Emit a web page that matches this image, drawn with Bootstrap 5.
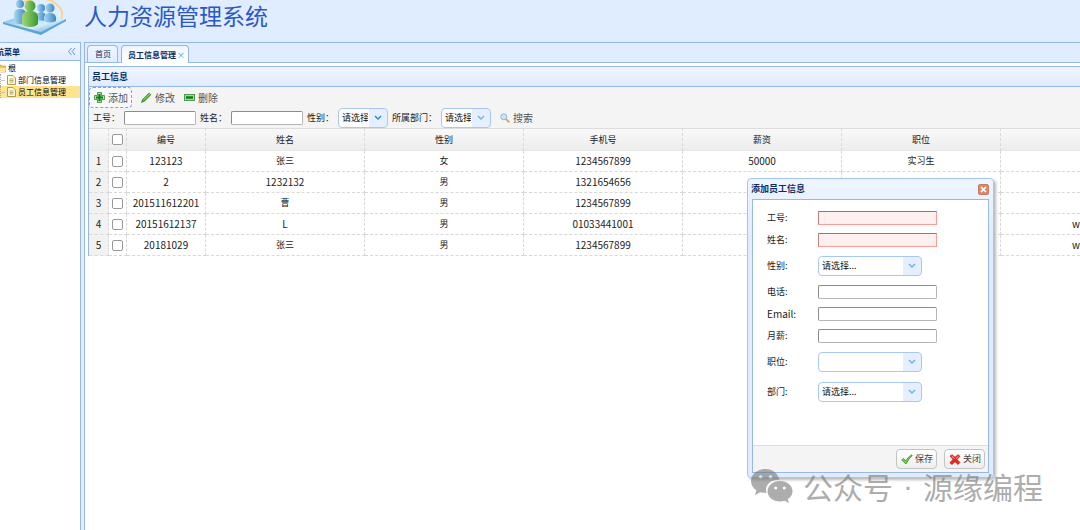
<!DOCTYPE html>
<html lang="zh-CN">
<head>
<meta charset="utf-8">
<meta name="viewport" content="width=device-width, initial-scale=1">
<title>人力资源管理系统</title>
<link href="https://cdn.jsdelivr.net/npm/bootstrap@5.3.0/dist/css/bootstrap.min.css" rel="stylesheet">
<style>
:root{--line:#95b8e7;--pale:#e0ecff;--navy:#0e2d5f}
body{font-family:"Noto Sans CJK SC",sans-serif;font-size:9px;line-height:12px;color:#222;background:#fff}
button,input,select{font:inherit;color:inherit}
.shell{overflow:hidden}
.top-bar{height:42px;background:var(--pale)}
.top-bar h1{font-size:23px;line-height:30px;color:#2a59c7;margin-left:18px}
.work{background:var(--pale)}
.side{width:81px;border:1px solid var(--line);border-left:0;border-bottom:0;background:#fff;overflow:hidden}
.side-in{margin-left:-12px}
.grad{background:linear-gradient(#eff5ff,#e0ecff)}
.side-title{height:18px;font-size:8px;color:var(--navy);border-bottom:1px solid var(--line)}
.side-title button,.tab-item button{color:#5590dd;line-height:12px}
.tree{font-size:8px;padding-top:1px}
.tree a{color:#000;text-decoration:none;height:12px;gap:2px;padding-left:12px}
.tree a:not(.root)::before{content:"";width:5px;height:12px;border-left:1px dotted #aaa;background:linear-gradient(#c4c4c4,#c4c4c4) center/100% 1px no-repeat}
.tree a.root{padding-left:9px}
.tree a.on{background:#ffe48d}
.main-pane{margin-left:3px;border:1px solid var(--line);border-right:0;border-bottom:0;background:#fff}
.tabs{height:20px;background:var(--pale);border-bottom:1px solid var(--line);padding:2px 2px 0;gap:3px}
.tab-item{height:17px;font-size:8px;padding:0 6px 0 7px;border:1px solid var(--line);border-bottom:0;border-radius:4px 4px 0 0;color:var(--navy);background:linear-gradient(#eff5ff,#e0ecff)}
.tab-item a{color:inherit;text-decoration:none}
.tab-item.on{height:18px;margin-bottom:-1px;background:linear-gradient(#eff5ff,#fff);padding:0 3px 0 6px;font-weight:700}
.tab-item button{font-size:8px;margin-left:1px}
.grid-panel{margin:3px 0 0 3px;border:1px solid var(--line);border-right:0;border-bottom:0}
.panel-title{height:20px;padding-left:3px;font-weight:700;color:var(--navy);border-bottom:1px solid var(--line)}
.tools{background:#f4f4f4}
.tool{height:21px;padding:0 3px 0 4px;gap:3px;color:#555;border:1px solid transparent;border-radius:4px;background:none;font-size:10px}
.tool.focused{border:1px dashed #9d8df0;background:#f8f8f8}
.search{height:20px;padding-left:4px}
.box{height:14px;border:1px solid #8c8c8c;border-right-color:#b5b5b5;border-bottom-color:#b5b5b5;border-radius:2px;background:#fff;padding:0 3px;min-width:0}
.search .box{width:72px}
.pick{appearance:none;height:20px;border:1px solid #a9c8f0;border-radius:4px;padding:0 19px 0 3px;color:#111;background:#fff url("data:image/svg+xml,%3Csvg xmlns='http://www.w3.org/2000/svg' viewBox='0 0 18 18'%3E%3Cpath fill='%23e5efff' d='M0 0h18v18H0z'/%3E%3Cpath d='m6 7 3 3 3-3' fill='none' stroke='%2362b3f0' stroke-width='1.4'/%3E%3C/svg%3E") right center/18px 18px no-repeat}
.search .pick{width:50px}
.pick.hot{background-image:url("data:image/svg+xml,%3Csvg xmlns='http://www.w3.org/2000/svg' viewBox='0 0 18 18'%3E%3Cpath fill='%23e5efff' d='M0 0h18v18H0z'/%3E%3Cpath d='m6 7 3 3 3-3' fill='none' stroke='%231a87e0' stroke-width='1.4'/%3E%3C/svg%3E")}
.data{width:100%;table-layout:fixed;border-collapse:separate;border-spacing:0;text-align:center;font-size:10px;line-height:12px;color:#222}
.data th,.data td{height:21px;padding:0;font-weight:400;border-right:1px dashed #d8d8d8;border-bottom:1px dashed #d8d8d8;white-space:nowrap;overflow:hidden}
.data thead{background:linear-gradient(#f9f9f9,#ececec)}
.data thead th{height:23px;border-top:1px solid #ddd;border-bottom:1px solid #e8e8e8}
.data .zh,.data thead th{font-size:9px}
.data td:first-child{background:#f2f2f2}
.data th:last-child,.data td:last-child{border-right:0}
.data input{appearance:none;width:11px;height:11px;border:1px solid #999;border-radius:2px;background:#fff;display:block;margin:auto}
.c-num{width:20px}.c-chk{width:18px}.c-id{width:79px}.c-std{width:159px}
.dlg{position:absolute;left:747px;top:178px;width:247px;padding:0 4px 4px;border:1px solid #a4c5ef;border-radius:4px;background:linear-gradient(#eff5ff,#e0ecff 20%);box-shadow:2px 2px 3px #bbb}
.dlg-title{height:20px;color:var(--navy);font-weight:700;margin-left:-1px}
.dlg-close{width:11px;height:11px;border-radius:2px;background:#df866a;border:1px solid #c97c64;padding:0}
.dlg-body{border:1px solid var(--line);background:#fff;padding:7px 14px 0}
.field{height:22px}
.field.tall{height:30px}
.field label{width:51px;color:#222}
.field .box{width:119px}
.field .pick{width:104px}
.box.bad{background:#fff0f0;border:1px solid #ff9c9c;border-top-color:#b06c6c;border-left-color:#c08080;border-radius:0}
.dlg-foot{margin:38px -14px 0;height:27px;gap:7px;padding-right:3px;border-top:1px solid #ddd;background:#f4f4f4}
.act{height:20px;padding:0 3px 0 4px;gap:2px;border:1px solid #c4c4c4;border-radius:4px;background:linear-gradient(#fff,#eee);color:#444}
.sign{position:absolute;left:751px;top:469px;font-size:30px;line-height:34px;color:#777;opacity:.6;gap:10px}
.sign-dot{font-family:"Liberation Sans",sans-serif}
.mail{font-size:10px}
</style>
</head>
<body>
<div class="shell position-relative vh-100 d-flex flex-column">
  <header class="top-bar d-flex flex-shrink-0">
    <svg width="66" height="36" viewBox="0 0 66 36" aria-hidden="true">
      <defs>
        <linearGradient id="gl" x1="0" y1="0" x2="1" y2="1"><stop stop-color="#6eb5e2"/><stop offset=".6" stop-color="#d6effb"/><stop offset="1" stop-color="#4a9bd2"/></linearGradient>
        <linearGradient id="gg" x1="0" x2="1"><stop stop-color="#a4d87a"/><stop offset="1" stop-color="#3a9a2e"/></linearGradient>
        <linearGradient id="gb" x1="0" x2="1"><stop stop-color="#a9d8f2"/><stop offset="1" stop-color="#3c86c4"/></linearGradient>
      </defs>
      <path d="M24 2Q44-6 56 4Q65 11 61 19" fill="none" stroke="#f7d58f" stroke-width="2"/>
      <path d="M3 22 28 14 66 19 41 32Z" fill="url(#gl)"/>
      <path d="M3 22 41 32 66 19V21L41 35 3 24Z" fill="#5ba5d5"/>
      <g fill="url(#gb)"><circle cx="20" cy="4" r="4"/><path d="M14 22V14q0-5 6-5t6 5v9q-6 3-12-1"/><circle cx="41" cy="8" r="4"/><path d="M36 20v-4q1-4 5-4t5 4v5Z"/><circle cx="50" cy="8" r="4.500"/><path d="M44 21v-4q1-4 6-4t6 4v4q-6 3-12 0"/></g>
      <g fill="url(#gg)"><circle cx="30" cy="6" r="5.500"/><path d="M22 24v-8q1-5 8-5t8 5v8q-2 3-8 3t-8-3"/></g>
    </svg>
    <h1 class="fw-normal mb-0">人力资源管理系统</h1>
  </header>
  <div class="work d-flex flex-grow-1">
    <aside class="side flex-shrink-0">
      <div class="side-in">
        <div class="side-title grad d-flex align-items-center justify-content-between pe-1">
          <strong>导航菜单</strong>
          <button class="btn border-0 p-0" aria-label="折叠"><svg class="d-block" width="9" height="9" viewBox="0 0 9 9" fill="none" stroke="#5b9bea"><path d="M4.500 1 1.500 4.500l3 3.500M8 1 5 4.500 8 8"/></svg></button>
        </div>
        <nav class="tree">
          <a href="#" class="root d-flex align-items-center"><svg width="9" height="9" viewBox="0 0 9 9"><path d="M0 1h4l1 1h4v6H0Z" fill="#eec35f" stroke="#bd9238" stroke-width=".6"/><path d="M2 4h7L8 8H0Z" fill="#ffe8a0"/></svg>根</a>
          <a href="#" class="d-flex align-items-center"><svg width="9" height="10" viewBox="0 0 9 10"><path d="M.5.500h5.500l2.500 2.500v6.500h-8Z" fill="#fffbd0" stroke="#b29c4a"/><path d="M2.500 4h4M2.500 5.500h4M2.500 7h4" stroke="#9a8a56" stroke-width=".7"/></svg>部门信息管理</a>
          <a href="#" class="on d-flex align-items-center"><svg width="9" height="10" viewBox="0 0 9 10"><path d="M.5.500h5.500l2.500 2.500v6.500h-8Z" fill="#fffbd0" stroke="#b29c4a"/><path d="M2.500 4h4M2.500 5.500h4M2.500 7h4" stroke="#9a8a56" stroke-width=".7"/></svg>员工信息管理</a>
        </nav>
      </div>
    </aside>
    <main class="main-pane flex-grow-1">
      <div class="tabs d-flex align-items-end">
        <div class="tab-item d-flex align-items-center"><a href="#">首页</a></div>
        <div class="tab-item on d-flex align-items-center"><a href="#">员工信息管理</a><button class="btn border-0 p-0" aria-label="关闭标签">×</button></div>
      </div>
      <section class="grid-panel">
        <div class="panel-title grad d-flex align-items-center">员工信息</div>
        <div class="tools">
          <div class="d-flex">
            <button class="tool focused d-flex align-items-center me-1"><svg width="11" height="11" viewBox="0 0 11 11"><path d="M3.500.500h4v3h3v4h-3v3h-4v-3h-3v-4h3Z" fill="#b8dfb4" stroke="#4f9a50"/><path d="M5.500 2v7M2 5.500h7" stroke="#098012" stroke-width="2.200"/></svg>添加</button>
            <button class="tool d-flex align-items-center"><svg width="11" height="11" viewBox="0 0 11 11"><path d="M.5 10.500 1.500 7.500 8 1l2 1.700L3.500 9.300Z" fill="#42a82b" stroke="#2c7e1d" stroke-width=".6"/><path d="M2.500 8 9 1.700" stroke="#a5df77"/></svg>修改</button>
            <button class="tool d-flex align-items-center"><svg width="11" height="7" viewBox="0 0 11 7"><rect x=".5" y=".5" width="10" height="6" fill="#a9d7aa" stroke="#4e9652"/><path d="M2 3.500h7" stroke="#078014" stroke-width="2.500"/></svg>删除</button>
          </div>
          <form class="search d-flex align-items-center">
            <label for="q-no" class="me-1">工号：</label><input id="q-no" class="box" type="text">
            <label for="q-name" class="ms-1 me-1">姓名：</label><input id="q-name" class="box" type="text">
            <label for="q-sex" class="ms-1 me-1">性别：</label><select id="q-sex" class="pick hot"><option>请选择...</option></select>
            <label for="q-dept" class="ms-1 me-1">所属部门：</label><select id="q-dept" class="pick"><option>请选择...</option></select>
            <button type="button" class="tool d-flex align-items-center ms-1"><svg width="10" height="10" viewBox="0 0 10 10"><path d="m6 6 3.300 3.300" stroke="#dda25a" stroke-width="1.800"/><circle cx="3.800" cy="3.800" r="3" fill="#c4e4ff" stroke="#8ab6de"/></svg>搜索</button>
          </form>
        </div>
        <table class="data">
          <colgroup><col class="c-num"><col class="c-chk"><col class="c-id"><col class="c-std"><col class="c-std"><col class="c-std"><col class="c-std"><col class="c-std"><col></colgroup>
          <thead><tr><th></th><th><input type="checkbox" aria-label="全选"></th><th>编号</th><th>姓名</th><th>性别</th><th>手机号</th><th>薪资</th><th>职位</th><th></th></tr></thead>
          <tbody>
            <tr><td>1</td><td><input type="checkbox" aria-label="第1行"></td><td>123123</td><td class="zh">张三</td><td class="zh">女</td><td>1234567899</td><td>50000</td><td class="zh">实习生</td><td></td></tr>
            <tr><td>2</td><td><input type="checkbox" aria-label="第2行"></td><td>2</td><td>1232132</td><td class="zh">男</td><td>1321654656</td><td></td><td></td><td></td></tr>
            <tr><td>3</td><td><input type="checkbox" aria-label="第3行"></td><td>201511612201</td><td class="zh">曹</td><td class="zh">男</td><td>1234567899</td><td></td><td></td><td></td></tr>
            <tr><td>4</td><td><input type="checkbox" aria-label="第4行"></td><td>20151612137</td><td>L</td><td class="zh">男</td><td>01033441001</td><td></td><td></td><td class="text-end">w</td></tr>
            <tr><td>5</td><td><input type="checkbox" aria-label="第5行"></td><td>20181029</td><td class="zh">张三</td><td class="zh">男</td><td>1234567899</td><td></td><td></td><td class="text-end">w</td></tr>
          </tbody>
        </table>
      </section>
    </main>
  </div>

  <div class="dlg" role="dialog" aria-labelledby="dlg-name">
    <div class="dlg-title d-flex align-items-center justify-content-between"><span id="dlg-name">添加员工信息</span>
      <button class="dlg-close d-flex" aria-label="关闭窗口"><svg width="9" height="9" viewBox="0 0 9 9"><path d="m2 2 5 5M7 2 2 7" stroke="#fff" stroke-width="1.700"/></svg></button></div>
    <form class="dlg-body">
      <div class="field d-flex align-items-center"><label for="f-no">工号:</label><input id="f-no" class="box bad" type="text"></div>
      <div class="field d-flex align-items-center"><label for="f-name">姓名:</label><input id="f-name" class="box bad" type="text"></div>
      <div class="field tall d-flex align-items-center"><label for="f-sex">性别:</label><select id="f-sex" class="pick"><option>请选择...</option></select></div>
      <div class="field d-flex align-items-center"><label for="f-tel">电话:</label><input id="f-tel" class="box" type="text"></div>
      <div class="field d-flex align-items-center"><label for="f-mail" class="mail">Email:</label><input id="f-mail" class="box" type="text"></div>
      <div class="field d-flex align-items-center"><label for="f-pay">月薪:</label><input id="f-pay" class="box" type="text"></div>
      <div class="field tall d-flex align-items-center"><label for="f-job">职位:</label><select id="f-job" class="pick"><option></option></select></div>
      <div class="field tall d-flex align-items-center"><label for="f-dept">部门:</label><select id="f-dept" class="pick"><option>请选择...</option></select></div>
      <div class="dlg-foot d-flex align-items-center justify-content-end">
        <button type="button" class="act d-flex align-items-center"><svg width="12" height="11" viewBox="0 0 12 11"><path d="M.7 6 2.500 4.500 4.700 7Q7 3 10.500.800l.8.700Q7.500 5 5 10Z" fill="#74c94e" stroke="#3c952c" stroke-width=".8"/></svg>保存</button>
        <button type="button" class="act d-flex align-items-center"><svg width="12" height="11" viewBox="0 0 12 11"><path d="M1 2 3 .700 6 3.300 9 .700 11 2.300 8 5.500 11 8.500 9 10.500 6 7.700 3 10.500.800 8.700 4 5.500Z" fill="#e5281f" stroke="#b81c1c" stroke-width=".7"/><path d="m2.500 2 3 2.500M9.500 2.200 7 4.500" stroke="#ffb0a8"/></svg>关闭</button>
      </div>
    </form>
  </div>

  <div class="sign d-flex align-items-center">
    <svg width="42" height="34" viewBox="0 0 42 34" aria-hidden="true"><path fill="#777" fill-rule="evenodd" d="M14.500 0C6.500 0 0 5.300 0 12c0 4 2 7 5.300 9.300L4 26l5.300-2.800q3 .8 6.200.800C13 16 20 10.500 28.500 10.800 27 4.500 21.500 0 14.500 0ZM9.700 6.200a1.800 1.800 0 1 1 0 3.600 1.800 1.800 0 0 1 0-3.600Zm9.800 0a1.800 1.800 0 1 1 0 3.600 1.800 1.800 0 0 1 0-3.600Z"/><path fill="#777" fill-rule="evenodd" d="M29 12c-7 0-12.500 4.600-12.500 10.300S22 32.500 29 32.500q2.500 0 4.700-.7L38 34l-1.200-3.700C40 28.300 41.500 25.500 41.500 22.300 41.500 16.600 36 12 29 12Zm-4.300 5.500a1.500 1.500 0 1 1 0 3 1.500 1.500 0 0 1 0-3Zm8.600 0a1.500 1.500 0 1 1 0 3 1.500 1.500 0 0 1 0-3Z"/></svg>
    <span>公众号</span><span class="sign-dot">·</span><span>源缘编程</span>
  </div>
</div>
<script src="https://cdn.jsdelivr.net/npm/bootstrap@5.3.0/dist/js/bootstrap.bundle.min.js"></script>
</body>
</html>
